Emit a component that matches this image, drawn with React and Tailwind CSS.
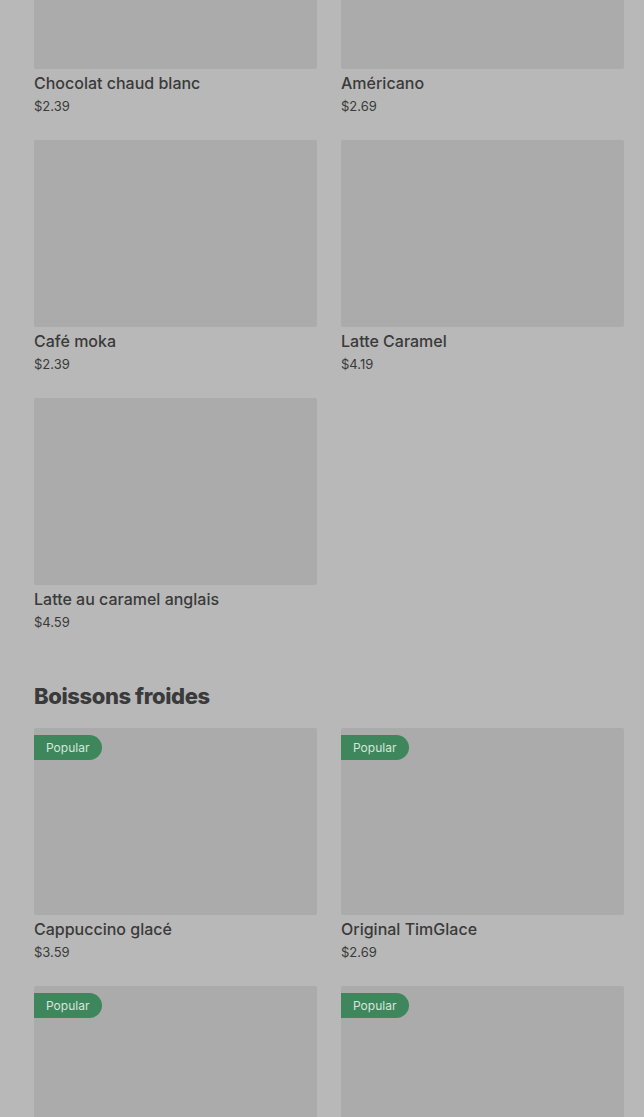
import React from 'react'

const hot = [
    { name: 'Chocolat chaud blanc', price: '$2.39' },
    { name: 'Américano', price: '$2.69' },
    { name: 'Café moka', price: '$2.39' },
    { name: 'Latte Caramel', price: '$4.19' },
    { name: 'Latte au caramel anglais', price: '$4.59' },
]

// last row sits below the fold, only the pictures show
const cold = [
    { name: 'Cappuccino glacé', price: '$3.59', popular: true },
    { name: 'Original TimGlace', price: '$2.69', popular: true },
    { popular: true },
    { popular: true },
]

function Card({ item }) {
    return (
        <div className="flex flex-col pb-[2px]">
            <div className="relative h-[187px] bg-[#ababab] rounded-[2px]">
                {item.popular && (
                    <span className="absolute left-0 top-[7px] h-[25px] w-[68px] flex items-center pl-3 rounded-r-full bg-[#3e875d] text-[12px] text-[#d6e6da]">
                        Popular
                    </span>
                )}
            </div>
            {item.name && (
                <>
                    <p className="mt-[2px] text-[16px] leading-6 font-medium text-[#3a3a3a]">{item.name}</p>
                    <p className="mt-[3px] text-[13px] leading-4 text-[#3a3a3a]">{item.price}</p>
                </>
            )}
        </div>
    )
}

export default function App() {
    return (
        <div className="h-[1117px] overflow-hidden bg-[#b8b8b8] pl-[34px] pr-[20px]" style={{ fontFamily: 'Inter, "Noto Sans", sans-serif' }}>
            <div className="-mt-[118px] grid grid-cols-2 gap-x-6 gap-y-6">
                {hot.map((item) => <Card key={item.name} item={item} />)}
            </div>

            <h2 className="mt-[48px] mb-[16px] text-[22px] leading-8 font-extrabold tracking-[-0.4px] text-[#3a3a3a]">Boissons froides</h2>

            <div className="grid grid-cols-2 gap-x-6 gap-y-6">
                {cold.map((item, i) => <Card key={i} item={item} />)}
            </div>
        </div>
    )
}
